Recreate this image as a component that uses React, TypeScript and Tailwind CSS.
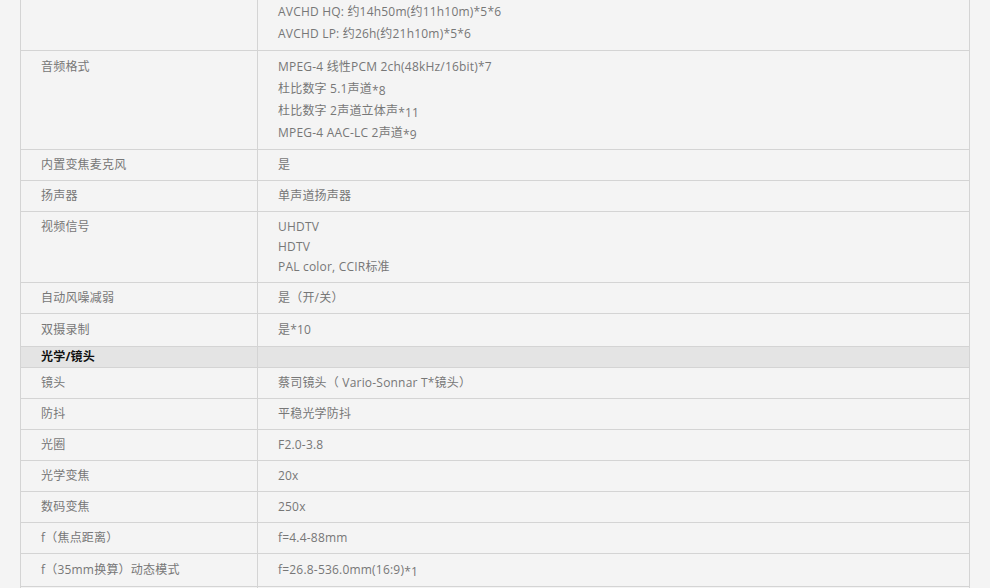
import React from "react";

type Line = { t: string; sup?: string };
type Row = { k: string; v: (string | Line)[]; head?: boolean; lh?: number; first?: boolean };

const rows: Row[] = [
  {
    k: "",
    v: [
      { t: "AVCHD HQ: 约14h50m(约11h10m)*5*6" },
      { t: "AVCHD LP: 约26h(约21h10m)*5*6" },
    ],
    lh: 22,
    first: true,
  },
  {
    k: "音频格式",
    v: [
      { t: "MPEG-4 线性PCM 2ch(48kHz/16bit)*7" },
      { t: "杜比数字 5.1声道", sup: "*8" },
      { t: "杜比数字 2声道立体声", sup: "*11" },
      { t: "MPEG-4 AAC-LC 2声道", sup: "*9" },
    ],
    lh: 22,
  },
  { k: "内置变焦麦克风", v: ["是"] },
  { k: "扬声器", v: ["单声道扬声器"] },
  { k: "视频信号", v: ["UHDTV", "HDTV", "PAL color, CCIR标准"] },
  { k: "自动风噪减弱", v: ["是（开/关）"] },
  { k: "双摄录制", v: ["是*10"], lh: 22 },
  { k: "光学/镜头", v: [""], head: true },
  { k: "镜头", v: ["蔡司镜头（ Vario-Sonnar T*镜头）"] },
  { k: "防抖", v: ["平稳光学防抖"] },
  { k: "光圈", v: ["F2.0-3.8"] },
  { k: "光学变焦", v: ["20x"] },
  { k: "数码变焦", v: ["250x"] },
  { k: "f（焦点距离）", v: ["f=4.4-88mm"] },
  { k: "f（35mm换算）动态模式", v: [{ t: "f=26.8-536.0mm(16:9)", sup: "*1" }], lh: 22 },
  { k: "", v: [""] },
];

export default function App() {
  return (
    <div
      className="w-[990px] h-[588px] overflow-hidden bg-[#f4f4f4] text-[12px] text-[#777777] tracking-[0.2px]"
      style={{ fontFamily: '"Open Sans", "Noto Sans CJK SC", sans-serif' }}
    >
      <div className="ml-[20px] w-[950px]">
        <table className="w-full border-collapse table-fixed">
          <colgroup>
            <col className="w-[237px]" />
            <col />
          </colgroup>
          <tbody>
            {rows.map((r, i) => {
              const lh = r.lh ?? 20;
              const pad = r.head ? "pt-0 pb-0" : r.first ? "pt-[1px] pb-[5px]" : "py-[5px]";
              return (
                <tr key={i} className={r.head ? "bg-[#e4e4e4]" : ""}>
                  <td
                    className={`align-top border border-[#d4d4d4] pl-[20px] ${pad} ${r.first ? "border-t-0" : ""} ${
                      r.head ? "font-bold text-[#111111]" : ""
                    }`}
                    style={{ lineHeight: `${lh}px` }}
                  >
                    {r.k}
                  </td>
                  <td
                    className={`align-top border border-[#d4d4d4] pl-[20px] ${pad} ${r.first ? "border-t-0" : ""}`}
                    style={{ lineHeight: `${lh}px` }}
                  >
                    {r.v.map((l, j) => {
                      const line = typeof l === "string" ? { t: l } : l;
                      return (
                        <div key={j} className="whitespace-nowrap">
                          {line.t}
                          {line.sup && <span className="relative top-[2px]">{line.sup}</span>}
                          {!line.t && !line.sup && "\u00a0"}
                        </div>
                      );
                    })}
                  </td>
                </tr>
              );
            })}
          </tbody>
        </table>
      </div>
    </div>
  );
}
